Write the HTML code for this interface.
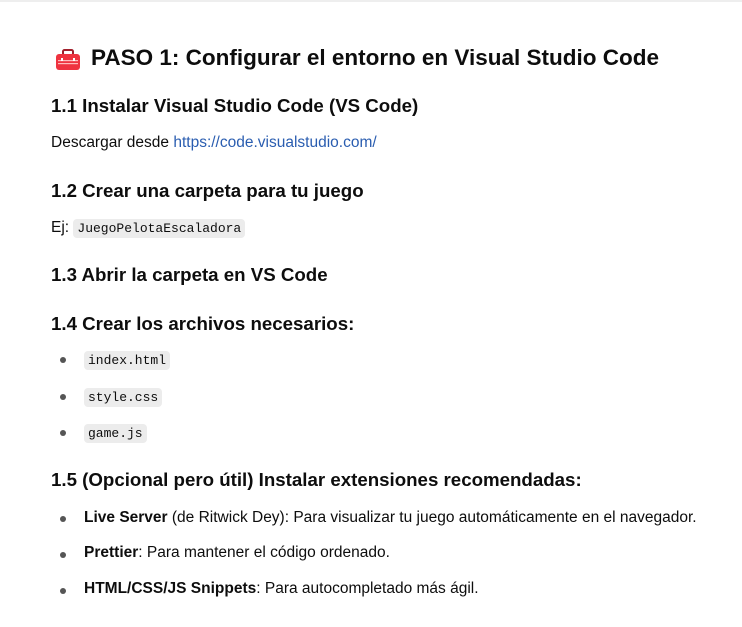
<!DOCTYPE html>
<html><head><meta charset="utf-8"><style>
body{margin:0;width:742px;height:627px;background:#fff;font-family:"Liberation Sans",sans-serif;color:#0d0d0d;position:relative;overflow:hidden}
.t{position:absolute;white-space:nowrap}
.h2{font-size:22.5px;font-weight:bold;left:91px;top:45px}
.h3{font-size:18.7px;font-weight:bold;left:51px}
.p{font-size:15.5px;left:51px}
code{font-family:"Liberation Mono",monospace;font-size:13px;background:#ececec;border-radius:4px;padding:2px 4px}
.dot{position:absolute;left:60px;width:6px;height:6px;border-radius:50%;background:#555}
a{color:#2a5db0;text-decoration:none}
</style></head><body>
<div style="position:absolute;left:0;top:0;width:742px;height:2px;background:#eee"></div>
<svg style="position:absolute;left:55px;top:49px" width="26" height="22" viewBox="0 0 26 22"><rect x="8" y="1" width="10" height="5" rx="1.5" fill="none" stroke="#a0202c" stroke-width="2"/><rect x="1" y="5" width="24" height="16" rx="3" fill="#ef3340"/><rect x="3" y="11" width="20" height="1.2" fill="#fbb"/><rect x="3" y="14" width="20" height="1.2" fill="#fbb"/><rect x="6" y="9" width="2" height="3" fill="#fff"/><rect x="18" y="9" width="2" height="3" fill="#fff"/></svg>
<div class="t h2">PASO 1: Configurar el entorno en Visual Studio Code</div>
<div class="t h3" style="top:95px">1.1 Instalar Visual Studio Code (VS Code)</div>
<div class="t p" style="top:134px">Descargar desde <a>https://code.visualstudio.com/</a></div>
<div class="t h3" style="top:180px">1.2 Crear una carpeta para tu juego</div>
<div class="t p" style="top:219px">Ej: <code>JuegoPelotaEscaladora</code></div>
<div class="t h3" style="top:264px">1.3 Abrir la carpeta en VS Code</div>
<div class="t h3" style="top:313px">1.4 Crear los archivos necesarios:</div>
<div class="dot" style="top:357px"></div><div class="t p" style="left:84px;top:351px"><code>index.html</code></div>
<div class="dot" style="top:394px"></div><div class="t p" style="left:84px;top:388px"><code>style.css</code></div>
<div class="dot" style="top:430px"></div><div class="t p" style="left:84px;top:424px"><code>game.js</code></div>
<div class="t h3" style="top:469px">1.5 (Opcional pero útil) Instalar extensiones recomendadas:</div>
<div class="dot" style="top:516px"></div><div class="t p" style="left:84px;top:509px"><b>Live Server</b> (de Ritwick Dey): Para visualizar tu juego automáticamente en el navegador.</div>
<div class="dot" style="top:552px"></div><div class="t p" style="left:84px;top:544px"><b>Prettier</b>: Para mantener el código ordenado.</div>
<div class="dot" style="top:588px"></div><div class="t p" style="left:84px;top:580px"><b>HTML/CSS/JS Snippets</b>: Para autocompletado más ágil.</div>
</body></html>
